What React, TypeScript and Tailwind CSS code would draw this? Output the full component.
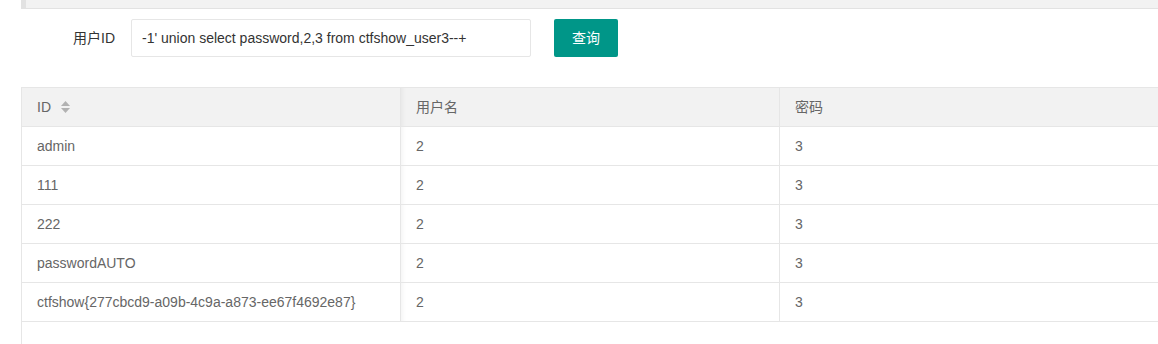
import React from "react";

const rows = [
  { id: "admin", name: "2", pass: "3" },
  { id: "111", name: "2", pass: "3" },
  { id: "222", name: "2", pass: "3" },
  { id: "passwordAUTO", name: "2", pass: "3" },
  { id: "ctfshow{277cbcd9-a09b-4c9a-a873-ee67f4692e87}", name: "2", pass: "3" },
];

const SortIcon = () => (
  <span className="ml-[10px] inline-flex flex-col gap-[2px]">
    <svg width="9" height="5" viewBox="0 0 9 5">
      <polygon points="4.5,0 9,5 0,5" fill="#b2b2b2" />
    </svg>
    <svg width="9" height="5" viewBox="0 0 9 5">
      <polygon points="0,0 9,0 4.5,5" fill="#b2b2b2" />
    </svg>
  </span>
);

const App = () => {
  const cell = "h-[39px] flex items-center px-[15px] border-b border-[#e6e6e6]";
  const shadow = "shadow-[inset_6px_0_5px_-5px_rgba(0,0,0,0.06)]";

  return (
    <div
      className="w-full h-[344px] bg-white overflow-hidden flex flex-col text-[14px]"
      style={{ fontFamily: '"Liberation Sans", Arial, "Noto Sans CJK SC", sans-serif' }}
    >
      {/* quote bar */}
      <div className="ml-[21px] h-[9px] bg-[#f2f2f2] border-l-[5px] border-b border-[#e2e2e2]" />

      {/* search form */}
      <div className="mt-[10px] flex items-center">
        <label className="w-[115px] text-right text-[#333]">用户ID</label>
        <input
          className="ml-[16px] w-[400px] h-[38px] border border-[#e6e6e6] rounded-[2px] pl-[10px] text-[#333] outline-none"
          defaultValue="-1' union select password,2,3 from ctfshow_user3--+"
        />
        <button className="ml-[23px] w-[64px] h-[38px] bg-[#009688] text-white rounded-[2px]">
          查询
        </button>
      </div>

      {/* table */}
      <div className="mt-[30px] ml-[21px] flex-1 border-l border-[#e6e6e6] text-[#666]">
        <div className="grid grid-cols-[379px_379px_379px] border-t border-[#e6e6e6]">
          <div className={`${cell} bg-[#f2f2f2] border-r`}>
            ID
            <SortIcon />
          </div>
          <div className={`${cell} bg-[#f2f2f2] border-r ${shadow}`}>用户名</div>
          <div className={`${cell} bg-[#f2f2f2]`}>密码</div>
          {rows.map((r, i) => (
            <React.Fragment key={i}>
              <div className={`${cell} border-r`}>{r.id}</div>
              <div className={`${cell} border-r ${shadow}`}>{r.name}</div>
              <div className={cell}>{r.pass}</div>
            </React.Fragment>
          ))}
        </div>
      </div>
    </div>
  );
};

export default App;
